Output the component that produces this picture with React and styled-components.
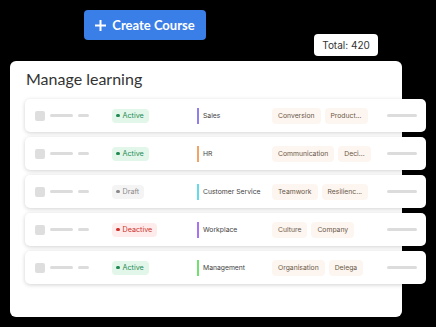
import styled, { createGlobalStyle } from "styled-components";

const GlobalStyle = createGlobalStyle`
    html, body {
        margin: 0;
        padding: 0;
        background: #000;
    }
    body {
        font-family: Inter, "Noto Sans", sans-serif;
    }
`;

const rows = [
    { status: "active", category: "Sales", color: "#8d80ee", tags: ["Conversion", "Product..."] },
    { status: "active", category: "HR", color: "#f2a366", tags: ["Communication", "Deci..."] },
    { status: "draft", category: "Customer Service", color: "#62dcea", tags: ["Teamwork", "Resilienc..."] },
    { status: "deactive", category: "Workplace", color: "#a872f0", tags: ["Culture", "Company"] },
    { status: "active", category: "Management", color: "#72e070", tags: ["Organisation", "Delega"] },
];

const statusLabels = { active: "Active", draft: "Draft", deactive: "Deactive" };

export default function App() {
    return (<Stage>
        <GlobalStyle />
        <Header>
            <CreateButton>
                <svg width="11" height="11" viewBox="0 0 11 11">
                    <path d="M5.5 0.5v10M0.5 5.5h10" stroke="#fff" strokeWidth="2" strokeLinecap="round" />
                </svg>
                Create Course
            </CreateButton>
            <Total>Total: 420</Total>
        </Header>
        <Panel>
            <Title>Manage learning</Title>
            <List>
                {rows.map((row, i) => (
                    <Row key={i}>
                        <Lead>
                            <Check />
                            <Line w={23} />
                            <Line w={11} />
                        </Lead>
                        <StatusCell>
                            <Badge status={row.status}><Dot />{statusLabels[row.status]}</Badge>
                        </StatusCell>
                        <Category color={row.color}>{row.category}</Category>
                        <Tags>
                            {row.tags.map(t => <Tag key={t}>{t}</Tag>)}
                        </Tags>
                        <Line w={30} />
                    </Row>
                ))}
            </List>
        </Panel>
    </Stage>)
}

const Stage = styled.div`
    width: 436px;
    height: 327px;
    background: #000;
    overflow: hidden;
`;

const Header = styled.div`
    display: flex;
    align-items: flex-start;
    height: 61px;
`;

const CreateButton = styled.div`
    margin: 10px 0 0 84px;
    width: 122px;
    height: 30px;
    box-sizing: border-box;
    background: #3a7ee8;
    border-radius: 4px;
    display: flex;
    align-items: center;
    justify-content: center;
    gap: 6px;
    color: #fff;
    font-family: Lato, Inter, sans-serif;
    font-size: 13px;
    font-weight: 700;
`;

const Total = styled.div`
    margin: 34px 0 0 108px;
    width: 64px;
    height: 22px;
    box-sizing: border-box;
    background: #fff;
    border-radius: 4px;
    display: flex;
    align-items: center;
    justify-content: center;
    font-size: 10px;
    color: #333;
`;

const Panel = styled.div`
    margin-left: 10px;
    width: 392px;
    height: 256px;
    background: #fff;
    border-radius: 6px;
    box-sizing: border-box;
    padding-top: 8px;
`;

const Title = styled.div`
    padding-left: 16px;
    font-family: Lato, Inter, sans-serif;
    font-size: 16px;
    line-height: 20px;
    color: #333;
    height: 30px;
`;

const List = styled.div`
    margin-left: 15px;
    width: 401px;
    display: flex;
    flex-direction: column;
    gap: 5px;
`;

const Row = styled.div`
    height: 33px;
    background: #fff;
    border-radius: 5px;
    box-shadow: 0 1px 4px rgba(0, 0, 0, 0.18);
    display: flex;
    align-items: center;
    padding-left: 10px;
    box-sizing: border-box;
`;

const Lead = styled.div`
    width: 77px;
    display: flex;
    align-items: center;
    gap: 5px;
`;

const Check = styled.div`
    width: 10px;
    height: 10px;
    border-radius: 2px;
    background: #dedede;
`;

const Line = styled.div`
    width: ${p => p.w}px;
    height: 3px;
    border-radius: 2px;
    background: #dcdcdc;
`;

const StatusCell = styled.div`
    width: 85px;
    display: flex;
    align-items: center;
`;

const badgeColors = {
    active: { bg: "#e2f6ea", fg: "#1f8a52" },
    draft: { bg: "#f4f4f4", fg: "#8a8a8a" },
    deactive: { bg: "#fdeceb", fg: "#d0302c" },
};

const Badge = styled.div`
    display: flex;
    align-items: center;
    gap: 3px;
    height: 14px;
    padding: 0 5px 0 4px;
    border-radius: 4px;
    font-size: 7.2px;
    background: ${p => badgeColors[p.status].bg};
    color: ${p => badgeColors[p.status].fg};
`;

const Dot = styled.span`
    width: 3.5px;
    height: 3.5px;
    border-radius: 50%;
    background: currentColor;
`;

const Category = styled.div`
    width: 75px;
    box-sizing: border-box;
    border-left: 2.5px solid ${p => p.color};
    padding-left: 4px;
    height: 16px;
    display: flex;
    align-items: center;
    font-size: 6.8px;
    color: #444;
    white-space: nowrap;
`;

const Tags = styled.div`
    width: 115px;
    display: flex;
    gap: 4px;
`;

const Tag = styled.div`
    height: 16px;
    padding: 0 6px;
    border-radius: 4px;
    background: #fdf6f0;
    color: #6b5848;
    font-size: 6.8px;
    display: flex;
    align-items: center;
    white-space: nowrap;
`;
